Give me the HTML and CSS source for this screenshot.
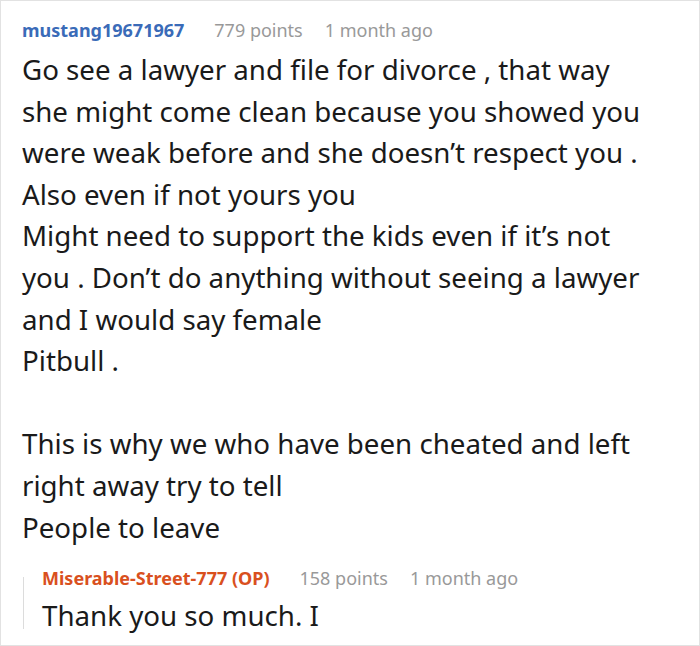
FILE: index.html
```html
<!DOCTYPE html>
<html>
<head>
<meta charset="utf-8">
<link rel="stylesheet" href="styles.css">
</head>
<body>
<div class="frame">
  <div class="comment">
    <div class="meta">
      <span class="user">mustang19671967</span>
      <span class="info points">779 points</span>
      <span class="info">1 month ago</span>
    </div>
    <div class="body">Go see a lawyer and file for divorce , that way she might come clean because you showed you were weak before and she doesn’t respect you .<br>Also even if not yours you<br>Might need to support the kids even if it’s not you . Don’t do anything without seeing a lawyer and I would say female<br>Pitbull .<br><br>This is why we who have been cheated and left right away try to tell<br>People to leave</div>
    <div class="reply">
      <div class="meta">
        <span class="user op">Miserable-Street-777 (OP)</span>
        <span class="info points">158 points</span>
        <span class="info">1 month ago</span>
      </div>
      <div class="body">Thank you so much. I</div>
    </div>
  </div>
</div>
</body>
</html>
```
FILE: styles.css
```css
html, body {
  margin: 0;
  padding: 0;
  background: #fff;
}
.frame {
  width: 700px;
  height: 646px;
  box-sizing: border-box;
  border: 1px solid #e2e2e2;
  overflow: hidden;
  font-family: "Noto Sans", "Open Sans", sans-serif;
}
.comment {
  padding: 17px 49px 0 21px;
}
.meta {
  display: flex;
  font-size: 18px;
  line-height: 24px;
  white-space: nowrap;
}
.user {
  color: #3a6bb8;
  font-weight: 700;
  margin-right: 30px;
}
.points {
  margin-right: 22px;
}
.user.op {
  color: #d9501e;
}
.info {
  color: #999;
}
.body {
  font-size: 27.7px;
  line-height: 41.6px;
  color: #1a1a1a;
  margin-top: 7px;
}
.reply {
  margin-top: 18px;
  margin-left: 1px;
  padding-left: 19px;
  background: linear-gradient(#dcdcdc, #dcdcdc) no-repeat 0 11px / 1px 52px;
}
.reply .body {
  margin-top: 5px;
}
```
